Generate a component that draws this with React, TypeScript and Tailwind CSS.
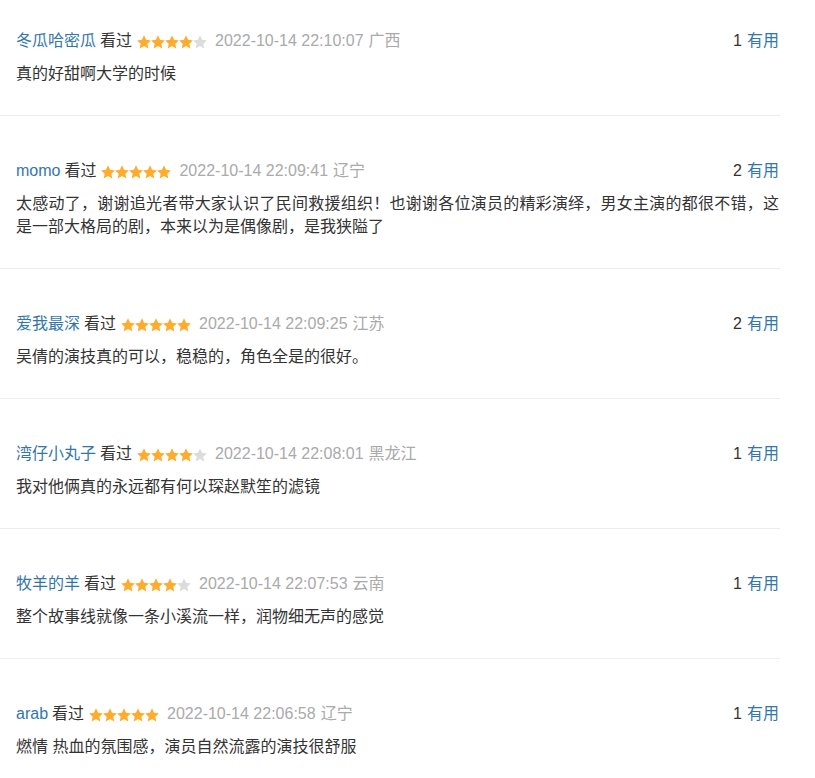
import React from "react";

type Review = {
  user: string;
  stars: number;
  time: string;
  loc: string;
  useful: number;
  text: string;
};

const reviews: Review[] = [
  { user: "冬瓜哈密瓜", stars: 4, time: "2022-10-14 22:10:07", loc: "广西", useful: 1, text: "真的好甜啊大学的时候" },
  {
    user: "momo",
    stars: 5,
    time: "2022-10-14 22:09:41",
    loc: "辽宁",
    useful: 2,
    text: "太感动了，谢谢追光者带大家认识了民间救援组织！也谢谢各位演员的精彩演绎，男女主演的都很不错，这是一部大格局的剧，本来以为是偶像剧，是我狭隘了",
  },
  { user: "爱我最深", stars: 5, time: "2022-10-14 22:09:25", loc: "江苏", useful: 2, text: "吴倩的演技真的可以，稳稳的，角色全是的很好。" },
  { user: "湾仔小丸子", stars: 4, time: "2022-10-14 22:08:01", loc: "黑龙江", useful: 1, text: "我对他俩真的永远都有何以琛赵默笙的滤镜" },
  { user: "牧羊的羊", stars: 4, time: "2022-10-14 22:07:53", loc: "云南", useful: 1, text: "整个故事线就像一条小溪流一样，润物细无声的感觉" },
  { user: "arab", stars: 5, time: "2022-10-14 22:06:58", loc: "辽宁", useful: 1, text: "燃情 热血的氛围感，演员自然流露的演技很舒服" },
];

function Star({ on }: { on: boolean }) {
  return (
    <svg width="14" height="14" viewBox="1.2 1.2 21.6 21.2" className="block">
      <path
        d="M12 1.5l3.2 6.9 7.4.9-5.5 5.1 1.5 7.4L12 18.1l-6.6 3.7 1.5-7.4L1.4 9.3l7.4-.9L12 1.5z"
        fill={on ? "#ffac2d" : "#dcdcdc"}
      />
    </svg>
  );
}

function Stars({ n }: { n: number }) {
  return (
    <span className="mx-[5px] mt-[1px] inline-flex">
      {[0, 1, 2, 3, 4].map((i) => (
        <Star key={i} on={i < n} />
      ))}
    </span>
  );
}

export default function App() {
  return (
    <div className="min-h-screen bg-white">
      <div
        className="w-[780px] text-[16px]"
        style={{ fontFamily: '"Liberation Sans", Arial, "Noto Sans CJK SC", sans-serif' }}
      >
        {reviews.map((r, idx) => (
          <div
            key={idx}
            className={
              "border-b border-[#eeeeee] pb-[30px] pl-4 pr-[1px] " +
              (idx === 0 ? "pt-[29px]" : "pt-[43px]")
            }
          >
            <div className="flex h-6 items-center justify-between leading-6">
              <div className="flex items-center">
                <span className="text-[#3377aa]">{r.user}</span>
                <span className="ml-[4px] text-[#333333]">看过</span>
                <Stars n={r.stars} />
                <span className="ml-[3px] text-[#aaaaaa]">{r.time}</span>
                <span className="ml-[5px] text-[#aaaaaa]">{r.loc}</span>
              </div>
              <div className="flex items-center">
                <span className="text-[#333333]">{r.useful}</span>
                <span className="ml-[5px] text-[#3377aa]">有用</span>
              </div>
            </div>
            <p className="mt-[9px] text-justify leading-[23px] text-[#333333]">{r.text}</p>
          </div>
        ))}
      </div>
    </div>
  );
}
